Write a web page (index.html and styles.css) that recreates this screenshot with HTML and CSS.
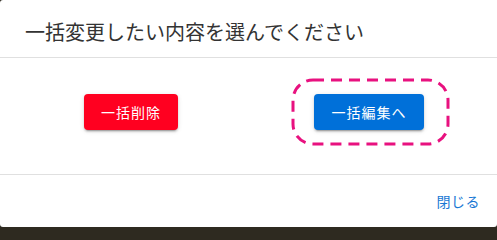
FILE: index.html
```html
<!DOCTYPE html>
<html lang="ja">
<head>
<meta charset="utf-8">
<link rel="stylesheet" href="styles.css">
</head>
<body>
<div class="dialog">
  <div class="header">一括変更したい内容を選んでください</div>
  <div class="content">
    <button class="btn btn-red">一括削除</button>
    <div class="highlight">
      <button class="btn btn-blue">一括編集へ</button>
      <svg class="dash" width="159" height="68" viewBox="0 0 159 68">
        <rect x="2" y="2" width="155" height="64" rx="20" ry="20" fill="none" stroke="#e8117f" stroke-width="3" stroke-dasharray="11 7"/>
      </svg>
    </div>
  </div>
  <div class="footer"><button class="link">閉じる</button></div>
</div>
</body>
</html>
```
FILE: styles.css
```css
html, body {
  margin: 0;
  padding: 0;
}
body {
  width: 497px;
  height: 228px;
  overflow: hidden;
  background: #2e2a20;
  font-family: "Noto Sans CJK JP", "Noto Sans", sans-serif;
}
.dialog {
  width: 497px;
  height: 227px;
  background: #ffffff;
  border-radius: 3px 0 3px 3px;
  display: flex;
  flex-direction: column;
}
.header {
  height: 58px;
  flex: none;
  box-sizing: border-box;
  padding: 16px 0 0 25px;
  font-size: 20px;
  line-height: 32px;
  color: #333333;
  border-bottom: 1px solid #e0e0e0;
}
.content {
  height: 117px;
  flex: none;
  box-sizing: border-box;
  border-bottom: 1px solid #e0e0e0;
  display: flex;
  align-items: flex-start;
  gap: 136px;
  padding: 36px 0 0 84px;
}
.highlight {
  position: relative;
  display: flex;
}
.dash {
  position: absolute;
  left: -23px;
  top: -16px;
}
.btn {
  font-family: inherit;
  height: 36px;
  border: none;
  border-radius: 4px;
  color: #ffffff;
  font-size: 14px;
  letter-spacing: 1px;
  padding: 0;
  box-shadow: 0 3px 1px -2px rgba(0,0,0,0.2), 0 2px 2px 0 rgba(0,0,0,0.14), 0 1px 5px 0 rgba(0,0,0,0.12);
}
.btn-red {
  width: 94px;
  background: #ff0020;
}
.btn-blue {
  width: 110px;
  background: #0070d9;
}
.footer {
  height: 52px;
  flex: none;
  display: flex;
  justify-content: flex-end;
  align-items: center;
  padding-right: 9px;
}
.link {
  font-family: inherit;
  background: none;
  border: none;
  color: #1a78d4;
  font-size: 14px;
  letter-spacing: 0.5px;
  padding: 0 8px;
  height: 36px;
}
```
